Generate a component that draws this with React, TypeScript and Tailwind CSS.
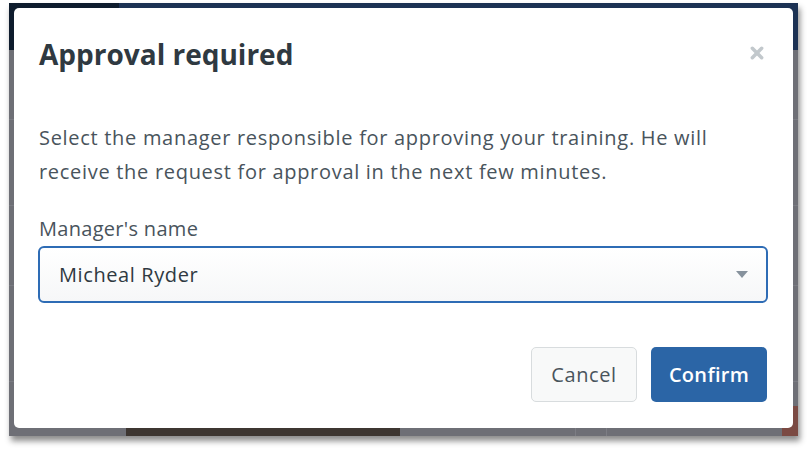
import React, { useState } from 'react';

const managers = ['Micheal Ryder', 'Sarah Connor', 'James Holden'];

const App: React.FC = () => {
  const [manager, setManager] = useState(managers[0]);

  return (
    <div className="min-h-screen bg-white pl-[9px] pt-[3px] font-['Open_Sans',sans-serif]">
      <div className="relative w-[789px] h-[433px] overflow-hidden bg-[#6e6f76] shadow-[2px_5px_6px_rgba(0,0,0,0.45)]">
        {/* page behind the overlay */}
        <div className="flex h-full flex-col">
          <div className="flex h-[47px]">
            <div className="w-[110px] bg-[#0e1c2d]" />
            <div className="flex-1 bg-[#1c3254]" />
          </div>
          <div className="h-[70px] border-b border-[#7a7b82]" />
          <div className="h-[86px] border-b border-[#7a7b82]" />
          <div className="h-[80px] border-b border-[#7a7b82]" />
          <div className="h-[96px] border-b border-[#7a7b82]" />
          <div className="flex flex-1 items-end">
            <div className="w-[117px]" />
            <div className="h-[10px] w-[274px] bg-[#3d3631]" />
            <div className="h-[10px] w-[176px] border-r border-[#7c7d84]" />
            <div className="h-[10px] w-[31px] border-r border-[#7c7d84]" />
            <div className="flex-1" />
            <div className="h-[30px] w-[16px] bg-[#7b4a43]" />
          </div>
        </div>

        {/* modal */}
        <div className="absolute left-[5px] top-[5px] flex h-[420px] w-[779px] flex-col rounded-[5px] bg-white px-[25px]">
          <div className="flex items-start justify-between pt-[28px]">
            <h2 className="text-[28px] font-bold leading-[36px] text-[#2f3941]">Approval required</h2>
            <button className="mr-[4px] mt-[10px] text-[#c2c8cc]" aria-label="Close">
              <svg width="14" height="14" viewBox="0 0 12 12">
                <path d="M2 2l8 8M10 2l-8 8" stroke="currentColor" strokeWidth="3" strokeLinecap="round" />
              </svg>
            </button>
          </div>

          <p className="mt-[49px] w-[690px] text-[20px] leading-[34px] tracking-[0.7px] text-[#49545c]">
            Select the manager responsible for approving your training. He will receive the request for approval in the next few minutes.
          </p>

          <label className="mt-[26px] text-[20px] leading-[28px] tracking-[0.3px] text-[#49545c]">Manager's name</label>
          <div className="relative -ml-px mt-[3px] h-[57px] w-[730px]">
            <select
              value={manager}
              onChange={e => setManager(e.target.value)}
              className="h-full w-full appearance-none rounded-[6px] border-2 border-[#2e6cb5] bg-gradient-to-b from-white to-[#f6f7f8] pl-[19px] text-[20px] tracking-[0.6px] text-[#2f3941] outline-none"
            >
              {managers.map(m => (
                <option key={m} value={m}>{m}</option>
              ))}
            </select>
            <svg className="pointer-events-none absolute right-[20px] top-[25px]" width="12" height="7" viewBox="0 0 12 7">
              <path d="M0 0h12L6 7z" fill="#87929d" />
            </svg>
          </div>

          <div className="mt-[44px] flex justify-end gap-[14px] pr-px">
            <button className="h-[55px] w-[106px] rounded-[5px] border border-[#d8dcde] bg-[#f8f9f9] text-[20px] tracking-[0.6px] text-[#49545c]">Cancel</button>
            <button className="h-[55px] w-[116px] rounded-[5px] bg-[#2b65a6] text-[20px] font-semibold tracking-[0.3px] text-white">Confirm</button>
          </div>
        </div>
      </div>
    </div>
  );
};

export default App;
